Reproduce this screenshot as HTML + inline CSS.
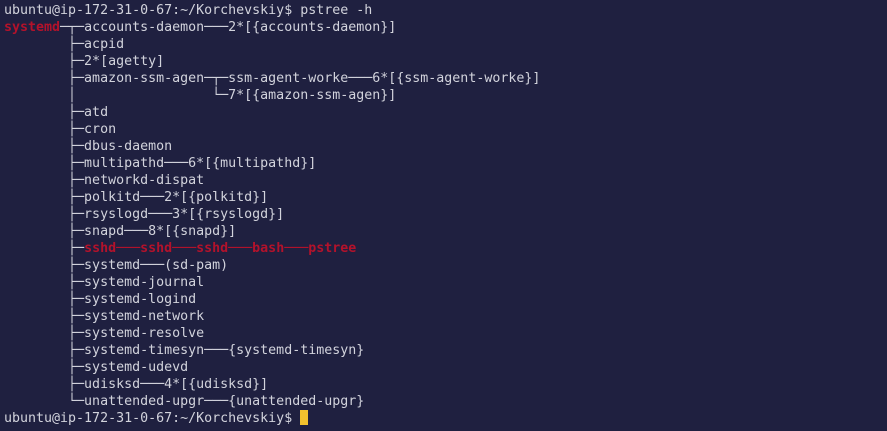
<!DOCTYPE html>
<html><head><style>
html,body{margin:0;padding:0;background:#1f2040;width:887px;height:431px;overflow:hidden}
pre{margin:0;padding:2px 0 0 4px;font-family:"DejaVu Sans Mono","Liberation Mono",monospace;font-size:13.3px;line-height:17px;color:#d2d3dc}
.r{color:#b3122b;font-weight:bold}
.c{display:inline-block;width:8px;height:15px;background:#f2c12e;vertical-align:-3px}
</style></head><body><pre>ubuntu@ip-172-31-0-67:~/Korchevskiy$ pstree -h
<span class="r">systemd</span>─┬─accounts-daemon───2*[{accounts-daemon}]
        ├─acpid
        ├─2*[agetty]
        ├─amazon-ssm-agen─┬─ssm-agent-worke───6*[{ssm-agent-worke}]
        │                 └─7*[{amazon-ssm-agen}]
        ├─atd
        ├─cron
        ├─dbus-daemon
        ├─multipathd───6*[{multipathd}]
        ├─networkd-dispat
        ├─polkitd───2*[{polkitd}]
        ├─rsyslogd───3*[{rsyslogd}]
        ├─snapd───8*[{snapd}]
        ├─<span class="r">sshd───sshd───sshd───bash───pstree</span>
        ├─systemd───(sd-pam)
        ├─systemd-journal
        ├─systemd-logind
        ├─systemd-network
        ├─systemd-resolve
        ├─systemd-timesyn───{systemd-timesyn}
        ├─systemd-udevd
        ├─udisksd───4*[{udisksd}]
        └─unattended-upgr───{unattended-upgr}
ubuntu@ip-172-31-0-67:~/Korchevskiy$ <span class="c"></span></pre></body></html>
